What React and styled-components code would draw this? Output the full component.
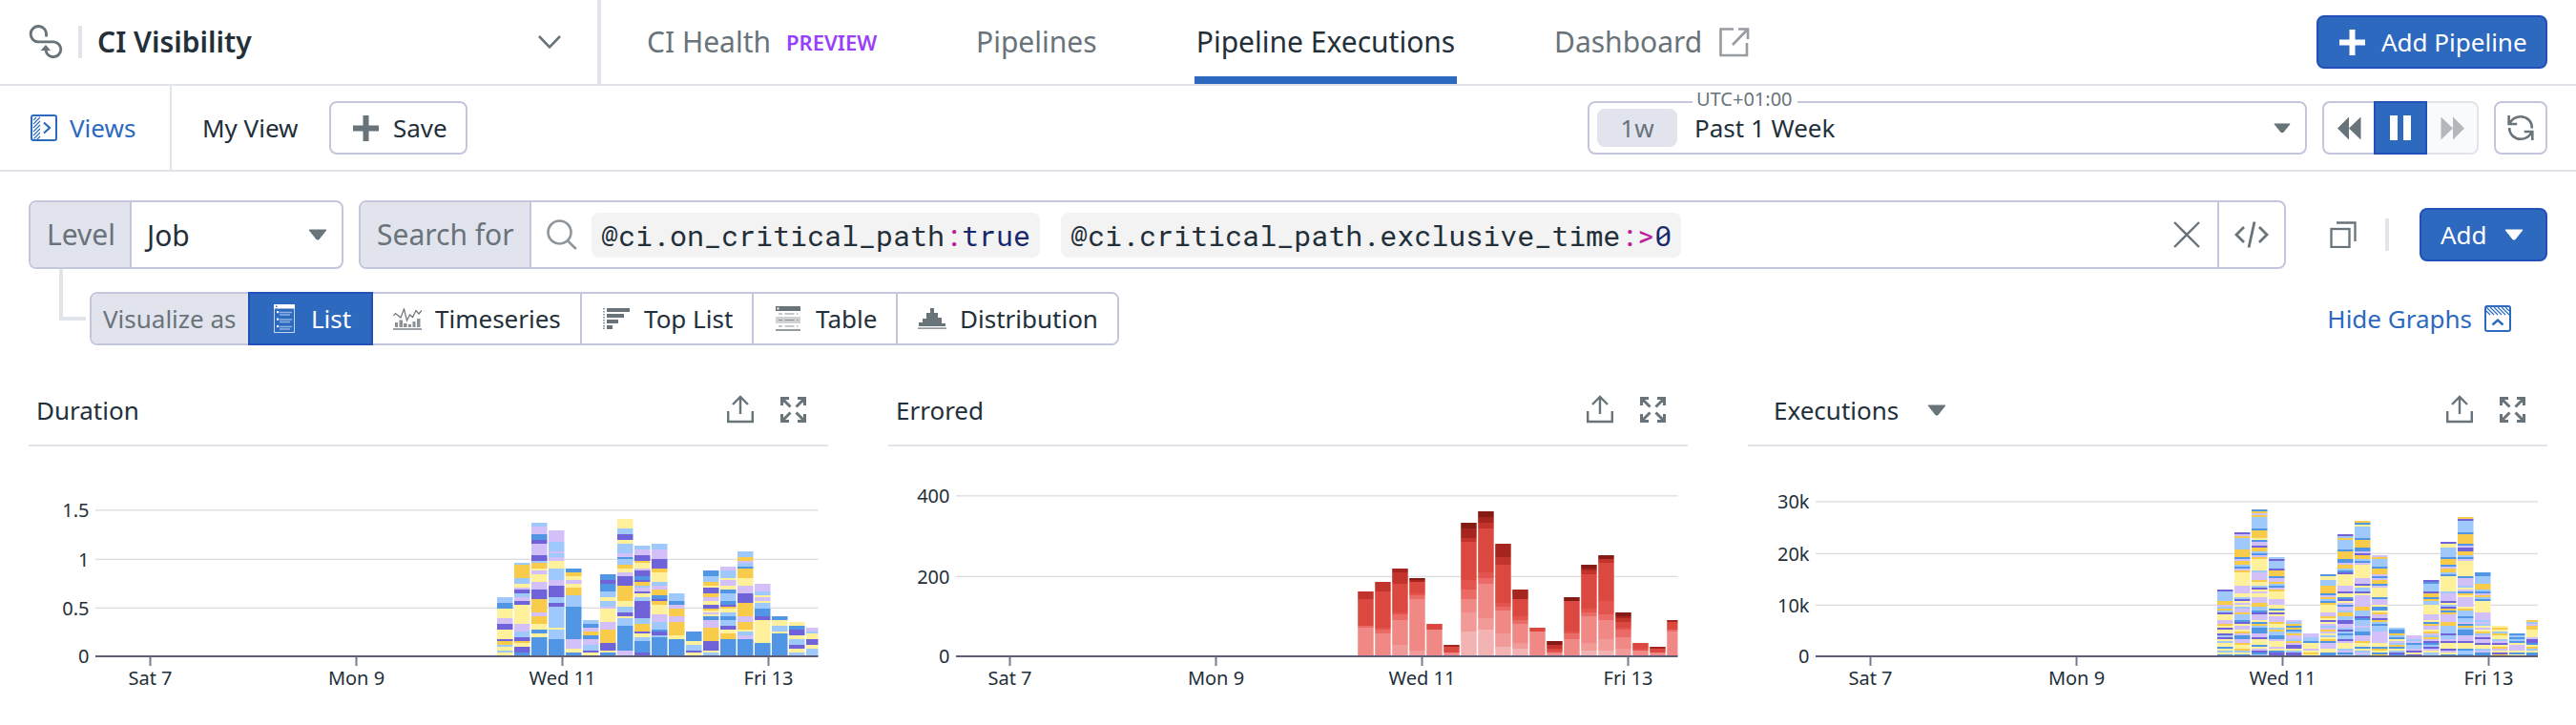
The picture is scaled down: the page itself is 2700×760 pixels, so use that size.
import React from "react";
import styled, { createGlobalStyle, css } from "styled-components";

const ink = "#232f39";
const grey = "#69737a";
const line = "#e1e5eb";
const border = "#c3c6dc";
const blue = "#2c69bf";
const blueEdge = "#2350b8";
const fill = "#e2e4ed";
const sans = `"Noto Sans", "Open Sans", sans-serif`;
const mono = `"Roboto Mono", "Liberation Mono", monospace`;

const GlobalStyle = createGlobalStyle`
  *, *::before, *::after { box-sizing: border-box; }
  body { margin: 0; background: #fff; }
  svg { display: block; flex: none; }
`;

const Page = styled.div`
  width: 2700px;
  height: 760px;
  overflow: hidden;
  background: #fff;
  color: ${ink};
  font: 400 26px/36px ${sans};
`;

const Bar = styled.div`
  height: 90px;
  display: flex;
  align-items: center;
  padding-right: 30px;
  border-bottom: 2px solid ${line};
`;

const ProductPicker = styled.div`
  width: 630px;
  height: 88px;
  display: flex;
  align-items: center;
  padding: 0 38px 0 30px;
  border-right: 4px solid ${line};
`;

const ProductName = styled.h1`
  flex: 1;
  margin: 0 0 0 16px;
  font-size: 30px;
  line-height: 40px;
  font-weight: 600;
`;

const Separator = styled.span`
  width: 4px;
  height: 34px;
  background: ${line};
  margin: ${(p) => p.$margin || 0};
`;

const Nav = styled.nav`
  flex: 1;
  height: 88px;
  display: flex;
  gap: 102px;
  padding-left: 48px;
`;

const NavItem = styled.a`
  width: ${(p) => p.$width}px;
  display: flex;
  align-items: center;
  white-space: nowrap;
  font-size: 30px;
  line-height: 40px;
  color: ${grey};
  ${(p) =>
    p.$active &&
    css`
      color: ${ink};
      justify-content: center;
      box-shadow: inset 0 -8px 0 ${blue};
    `}
`;

const Preview = styled.span`
  margin-left: 16px;
  font-size: 22px;
  font-weight: 600;
  color: #983ffb;
`;

const Button = styled.button`
  width: ${(p) => p.$width}px;
  height: 56px;
  flex: none;
  display: flex;
  align-items: center;
  justify-content: ${(p) => p.$justify || "flex-start"};
  gap: ${(p) => p.$gap || 0}px;
  padding: 0 0 0 ${(p) => p.$pad || 0}px;
  font: 400 26px/36px ${sans};
  white-space: nowrap;
  border-radius: 8px;
  border: 2px solid ${(p) => (p.$primary ? blueEdge : border)};
  background: ${(p) => (p.$primary ? blue : "#fff")};
  color: ${(p) => (p.$primary ? "#fff" : ink)};
`;

const ViewsToggle = styled.div`
  width: 180px;
  height: 88px;
  display: flex;
  align-items: center;
  gap: 13px;
  padding-left: 32px;
  border-right: 2px solid ${line};
  color: ${blue};
`;

const ViewName = styled.span`
  width: 133px;
  margin-left: 32px;
`;

const Spacer = styled.div`
  flex: 1;
`;

const TimePicker = styled.div`
  position: relative;
  width: 754px;
  height: 56px;
  display: flex;
  align-items: center;
  padding: 0 15px 0 8px;
  margin-right: 16px;
  border: 2px solid ${border};
  border-radius: 8px;
`;

const ZoneLabel = styled.span`
  position: absolute;
  left: 108px;
  top: -17px;
  padding: 0 5px 0 4px;
  background: #fff;
  color: ${grey};
  font-size: 20px;
  line-height: 26px;
`;

const SpanPill = styled.span`
  width: 84px;
  height: 40px;
  display: flex;
  align-items: center;
  justify-content: center;
  margin-right: 18px;
  border-radius: 8px;
  background: ${fill};
  color: ${grey};
`;

const Playback = styled.div`
  display: flex;
  margin-right: 16px;
`;

const PlayButton = styled.button`
  width: ${(p) => p.$width}px;
  height: 56px;
  padding: 0;
  display: flex;
  align-items: center;
  justify-content: center;
  background: #fff;
  border: 2px solid ${border};
  &:first-child { border-right: 0; border-radius: 8px 0 0 8px; }
  &:last-child { border-left: 0; border-radius: 0 8px 8px 0; border-color: ${line}; background: #f9fafc; }
  ${(p) => p.$active && css`background: ${blue}; border-color: ${blueEdge};`}
`;

const QueryRow = styled.div`
  height: 102px;
  display: flex;
  align-items: center;
  padding: 30px 30px 0;
`;

const Field = styled.div`
  width: ${(p) => p.$width}px;
  height: 72px;
  margin-right: ${(p) => p.$after}px;
  display: flex;
  align-items: stretch;
  border: 2px solid ${border};
  border-radius: 8px;
  overflow: hidden;
  font-size: 30px;
  line-height: 67px;
  white-space: nowrap;
`;

const FieldLabel = styled.span`
  width: ${(p) => p.$width}px;
  padding-left: 17px;
  border-right: 2px solid ${border};
  background: ${fill};
  color: ${grey};
`;

const FieldValue = styled.div`
  flex: 1;
  display: flex;
  align-items: center;
  justify-content: space-between;
  padding: 0 15px 0 16px;
`;

const SearchInput = styled.div`
  flex: 1;
  display: flex;
  align-items: center;
  padding: 0 18px 0 16px;
`;

const Chip = styled.span`
  height: 47px;
  padding: 0 10px;
  margin-left: ${(p) => p.$gap}px;
  border-radius: 8px;
  background: #f3f3f3;
  font: 400 30px/47px ${mono};
`;
const Operator = styled.span`color: #bb1f9d;`;
const Value = styled.span`color: #17296b;`;

const CodeToggle = styled.div`
  width: 70px;
  display: flex;
  align-items: center;
  justify-content: center;
  border-left: 2px solid ${border};
`;

const VisualizeRow = styled.div`
  height: 80px;
  display: flex;
  padding: 0 68px 0 62px;
`;

const Connector = styled.span`
  width: 28px;
  height: 54px;
  border-left: 4px solid ${line};
  border-bottom: 4px solid ${line};
`;

const Segments = styled.div`
  height: 56px;
  display: flex;
  margin: 24px 0 0 4px;
  border: 2px solid ${border};
  border-radius: 8px;
`;

const SegmentLabel = styled.span`
  width: 164px;
  padding-left: 12px;
  line-height: 52px;
  border-radius: 6px 0 0 6px;
  background: ${fill};
  color: ${grey};
  white-space: nowrap;
`;

const Segment = styled.button`
  width: ${(p) => p.$width}px;
  height: 52px;
  display: flex;
  align-items: center;
  gap: ${(p) => p.$gap}px;
  padding: 0 0 0 ${(p) => p.$pad}px;
  font: 400 26px/36px ${sans};
  color: ${ink};
  white-space: nowrap;
  background: #fff;
  border: 0;
  border-right: 2px solid ${border};
  &:last-child { border-right: 0; border-radius: 0 6px 6px 0; }
  ${(p) =>
    p.$active &&
    css`
      height: 56px;
      margin: -2px 0;
      border: 2px solid ${blueEdge};
      background: ${blue};
      color: #fff;
    `}
`;

const HideGraphs = styled.a`
  display: flex;
  align-items: center;
  gap: 13px;
  margin-top: 24px;
  height: 56px;
  color: ${blue};
`;

const Panels = styled.div`
  display: grid;
  grid-template-columns: repeat(3, 838px);
  gap: 63px;
  padding: 30px 30px 0;
`;

const PanelHead = styled.div`
  height: 76px;
  display: flex;
  align-items: center;
  padding: 0 23px 0 ${(p) => p.$inset}px;
  border-bottom: 2px solid ${line};
`;

const PanelTitle = styled.h2`
  margin: 2px 0 0;
  font-size: 26px;
  line-height: 36px;
  font-weight: 400;
`;

const PanelActions = styled.div`
  display: flex;
  align-items: center;
  gap: 28px;
  margin-left: auto;
`;

const TitleCaret = styled.span`margin: 2px 0 0 30px;`;

/* ---------- icons ---------- */

const Plus = ({ color, size = 27 }) => (
  <svg width={size} height={size} viewBox="0 0 27 27">
    <path d="M13.5 0v27M0 13.5h27" stroke={color} strokeWidth="6" />
  </svg>
);

const Caret = ({ color = grey, width = 20 }) => (
  <svg width={width} height={(width * 12) / 20} viewBox="0 0 20 12">
    <path d="M1 1h18L11 11H9z" fill={color} stroke={color} strokeLinejoin="round" />
  </svg>
);

const LogoIcon = () => (
  <svg width="36" height="36" viewBox="0 0 36 36" fill="none" stroke={grey} strokeWidth="2.9">
    <path d="M18.500 12.500V10.500a8.200 8.200 0 1 0-8.200 7.400H26.500a7.900 7.900 0 1 1-8.500 8.400V25" />
    <path d="M12.500 27h10.500L18 21z" fill={grey} stroke="none" />
  </svg>
);

const Chevron = () => (
  <svg width="24" height="14" viewBox="0 0 24 14" fill="none" stroke={grey} strokeWidth="2.6">
    <path d="M1 1l11 11.4L23 1" />
  </svg>
);

const ViewsIcon = () => (
  <svg width="28" height="28" viewBox="0 0 28 28" fill="none" stroke={blue}>
    <rect x="1" y="1" width="26" height="26" rx="2" strokeWidth="2" />
    <path d="M3 6l3-3M3 10l7-7M3 14l7-7M3 18l7-7M3 22l7-7M3.500 25.500l6.500-6.500M6.500 26.500l3.500-3.500" strokeWidth="1.1" />
    <path d="M14 8.500l6 5.500-6 5.500" strokeWidth="2.2" />
  </svg>
);

const HideIcon = () => (
  <svg width="28" height="28" viewBox="0 0 28 28" fill="none" stroke={blue}>
    <rect x="1" y="1" width="26" height="26" rx="2" strokeWidth="2" />
    <path d="M2 6l4 4M2 2l8 8M6 2l8 8M10 2l8 8M14 2l8 8M18 2l8 8M22 2l4 4" strokeWidth="1.1" />
    <path d="M8.500 20.500l5.500-5 5.500 5" strokeWidth="2.4" />
  </svg>
);

const ExternalIcon = () => (
  <svg width="32" height="31" viewBox="0 0 32 31" fill="none" stroke="#969ca1" strokeWidth="2.6">
    <path d="M15 1.500H1.500v27.500h27.500V16" />
    <path d="M20 1.500h10V12M30 1.500L14 18" />
  </svg>
);

const Rewind = ({ color = grey, flip }) => (
  <svg width="25" height="25" viewBox="0 0 25 25" fill={color}>
    <g transform={flip ? "translate(25 0) scale(-1 1)" : undefined}>
      <path d="M0 12.500L12 0.500v24zM12 12.500L24.500 0.500v24z" />
    </g>
  </svg>
);

const Pause = () => (
  <svg width="22" height="26" viewBox="0 0 22 26" fill="#fff">
    <path d="M0 0h8v26H0zM14 0h8v26h-8z" />
  </svg>
);

const Refresh = () => (
  <svg width="28" height="28" viewBox="0 0 28 28" fill="none" stroke={grey} strokeWidth="2.6">
    <path d="M25.800 14.500C26 7 20.500 2.200 14 2.200c-5 0-9 2.500-11.500 6.800" />
    <path d="M1.600 1v9h8.600" />
    <path d="M2.200 14c0 7 5.300 11.800 11.800 11.800 5 0 9-2.600 11.300-6.800" />
    <path d="M26.300 27v-9h-8.600" />
  </svg>
);

const SearchIcon = () => (
  <svg width="32" height="32" viewBox="0 0 32 32" fill="none" stroke="#8f969b" strokeWidth="2.600">
    <circle cx="13.500" cy="13.500" r="12" />
    <path d="M21.800 22.200l9 8.800" />
  </svg>
);

const CloseIcon = () => (
  <svg width="28" height="28" viewBox="0 0 28 28" stroke={grey} strokeWidth="2.400">
    <path d="M1 1l26 26M27 1L1 27" />
  </svg>
);

const CodeIcon = () => (
  <svg width="36" height="28" viewBox="0 0 36 28" fill="none" stroke={grey} strokeWidth="2.800">
    <path d="M10 6L2 14l8 8M26 6l8 8-8 8M21 0.500L15 27.500" />
  </svg>
);

const CopyIcon = () => (
  <svg width="28" height="28" viewBox="0 0 28 28" fill="none" stroke={grey} strokeWidth="2.300">
    <rect x="1.500" y="8" width="19" height="19" />
    <path d="M7 1.500h19.500V21" />
  </svg>
);

const ShareIcon = () => (
  <svg width="28" height="30" viewBox="0 0 28 30" fill="none" stroke={grey} strokeWidth="2.400">
    <path d="M1.200 17v11h25.600V17M14 20V2.500M6 10l8-8 8 8" />
  </svg>
);

const ExpandIcon = () => (
  <svg width="27" height="27" viewBox="0 0 27 27" fill="none" stroke={grey} strokeWidth="3">
    <path d="M1.500 9V1.500H9M2 2l8.500 8.500M18 1.500h7.500V9M25 2l-8.500 8.500M1.500 18v7.500H9M2 25l8.500-8.500M18 25.500h7.500V18M25 25l-8.500-8.500" />
  </svg>
);

const ListIcon = () => (
  <svg width="22" height="30" viewBox="0 0 22 30">
    <rect x="0.500" y="0.500" width="21" height="29" fill="none" stroke="#c3d5ee" />
    <rect width="22" height="4.500" fill="#fff" />
    <rect x="2" y="1.500" width="1.500" height="1.500" fill={blue} />
    {[7, 14.500, 22].map((y) => (
      <g key={y}>
        <rect x="3" y={y} width="2.200" height="2.200" fill="#fff" />
        <path d={`M6 ${y + 1.500}h13M6 ${y + 4}h11`} stroke="#8fb2e0" strokeWidth="1.500" />
      </g>
    ))}
  </svg>
);

const TimeseriesIcon = () => (
  <svg width="30" height="23" viewBox="0 0 30 23" fill="none">
    <path d="M0.500 8l2-2.500 3 2.500 2.500 2L11.500 1l3 12 3-6 3 2.500 3.500-7 3 3.500 3-3.500" stroke={grey} strokeWidth="1.200" />
    <path d="M2 15h3v5H2zM6.500 12.500h3.500V20H6.500zM11 16h3.500v4H11zM16 17h3v3h-3zM20.500 14h3v6h-3zM25 11h3.500v9H25z" fill="#8a9196" />
    <path d="M0 22h30" stroke="#8a9196" strokeWidth="1.700" />
  </svg>
);

const TopListIcon = () => (
  <svg width="28" height="22" viewBox="0 0 28 22" fill={grey}>
    <path d="M4 0h24v4H4zM4 6h18v4H4zM4 12h12v4H4zM4 18h6v4H4z" />
    <path d="M0 0h2v1.500H0zM0 3h2v1.500H0zM0 6h2v1.500H0zM0 9h2v1.500H0zM0 12h2v1.500H0zM0 15h2v1.500H0zM0 18h2v1.500H0zM0 20.500h2v1.500H0z" opacity="0.7" />
  </svg>
);

const TableIcon = () => (
  <svg width="26" height="26" viewBox="0 0 26 26">
    <path d="M0 0h26v5H0z" fill={grey} />
    <path d="M1.500 1.500h2v2h-2z" fill="#fff" />
    <path d="M0 11h26v7H0z" fill="#cfd2d5" />
    <path d="M3 8h4M9.500 8h10M22 8h1.500M3 14.500h4M9.500 14.500h10M22 14.500h1.500M3 21h4M9.500 21h10M22 21h1.500" stroke="#8a9196" strokeWidth="1.200" />
    <path d="M0 25h26" stroke="#8a9196" strokeWidth="1.800" />
  </svg>
);

const DistributionIcon = () => (
  <svg width="30" height="22" viewBox="0 0 30 22" fill={grey}>
    <path d="M1 19v-4h4v-4h4V5h4V0h4v5h4v5h4v6h4v3z" />
    <path d="M0 20.300h30v1.700H0z" opacity="0.7" />
  </svg>
);

/* ---------- charts ---------- */

const categorical = {
  b: "#5196e5",
  l: "#9fc8fb",
  y: "#fff09c",
  g: "#f8cb4b",
  p: "#7062d8",
  v: "#d4c0f9",
};

const reds = {
  A: "#861b15",
  B: "#a6261f",
  C: "#c2332b",
  D: "#db483f",
  E: "#e4544e",
  F: "#ea6a66",
  G: "#f08986",
  H: "#f19a98",
  I: "#f3b3b2",
};

// Each string is one stacked bar, top to bottom: a colour key and its height in steps.
const durationBars = [
  "l3b3y5v3p3y5p1g2l1y2l1y2",
  "l1g7l3y2v1p2l2v2p2y10v4l3p2g1y2p3b2",
  "l2v4b3p2v6p3l1g3y1v2y4v4p5g7v2g4y3b2y2b10",
  "v6l5v1l2v2y4l6v3p6l3p2l11y1l5b9",
  "b2g2y2v2y2g4l6b17v5y2b2",
  "l2b2v2g2b2v3l3p1y2",
  "b3p2b4l3y2l3v1y7v4g7p4y1b2",
  "y5l3p3y2l5v2b1l3g2y2v2p5g8y3l3p2y1l4b13v3",
  "l2v3p3g1y3v1p3b2p1g2l1v2p1y2l2p9l3g4p1y2l2b6p2",
  "l3v5p5g2y5l2v2g3b2p1g2y5v4l4b1p2l1b10",
  "l4b2v2g4v3g7y2b9",
  "b5y2l3p1y2",
  "b3l3g2y1p3g2v2y2p2g1y1v1y1b2v4g7p5y1l2",
  "v2l4y1v3y2b2l4b2p1g1y2l2b2l3p2y2g3b9",
  "l3g2v1l2b1g5y4v4p5g7v3g4y1l2v2b9",
  "v4l2y1v2y1l3b4p2y12b7",
  "b2y3l3y1b12",
  "y2b2p3y2l3p2y2l2",
  "v2l1y3p3y2l4",
];

const erroredBars = [
  "C4D14F1G15",
  "C5D19E1F2G12",
  "B2C6D15E1F3G13H6",
  "A1B1D6E1F2G27H3",
  "D3G14",
  "B1D3G2",
  "A3B5C2D20E5F5G7H10I13",
  "A3B3C3D23E3F3G18H6I14",
  "B7C4D20E2F2G12H7I5",
  "B5D9E2F2G10H3I4",
  "D2G13",
  "A2C2D1E1G2",
  "A2D16E1F3G9",
  "A2B1C2D18E2F2G14H4I3",
  "A2C2D20E7F3G10H6I3",
  "A2B1C2D3E1F4G6H4",
  "D3E1G3",
  "B1D2G2",
  "B1D4F1G13",
];

const executionBars = [
  "p1l5g2v1l1g1l1p1y3v2g1y1p1y2p1l1p1y1l1y2b1y1l1y1b1",
  "p1v1g1l6g4b1v1g2l1b1v1g1y7v4y2l1p1y1v1y1l1v2g1l3b1p1y1v2y1g1v1b2v2g1y2g1l1y1b1",
  "b1g1v1g1l6b1g4y1b1v2p1g2l1b1v1g1y6l1v4g1y2l1p1y1v1y2v3g2l2b1p1v3y1b1g1l1b3v2p1y3b1y1v1p1b1l1",
  "l1p1l4p1g3b1v2g1l1b1v1g1y4v3y2b1y1p1y1v3g1y2l1g1l2b2v1y3v1y1b1p2",
  "v1l1g1b1g1b1l1g1v2l1g1v1p2y1l1p2",
  "v2l2b1y3v1y1g1y1",
  "b1y2l3g4b1v1g1l1b1g1y4v2g1y1p1y1v1l1v1g1v1y1l1y1g1b1v3y2b2",
  "p1l1g1l5b1g4b2v1g2l1b1p1y6v3p1y2b1p1y1v1b1v2l1g2l2p2v2l1p1l1b1l2p1v1y3l1v1b1l1",
  "g1b1y1l6b1g4b2v1p1g2l1b1v1y7v3p1y1l2p1y1v1v5g2l3p1b1l3v1l2b2v3g1y2b1y1l1v1l1",
  "v1g1l4b1g3v1b1v1g2b1v1y5b1v3y1b2y1g1v2p1g1l1b1l3v6y2b1g1y1b1g1",
  "l1b2g1l1b1y1v1l1g1b1y1l1p1b1",
  "v2l1v1b1l2v1p1y1p1",
  "p1b1l4p1g2b1g1l2y5v3y1b1g1v2y1g1v1l1g1v1p1b1l1p1v1y1l2",
  "p1y2l5b1g3b1v1g2l1b1y8l1v4p1y1l1p1g1b1g1v4g2l4p1l2v1p1y3p1v1y1b1",
  "g1p1l6b1g5b1v1p2g2l1b1v1y8b1v4l1y1v1b1g1y1v5y1g1l3b1l2v1b1g1l1b3v3p1y3b1l1l1b1",
  "b2l4g3l1b1v1g1l1b1y6v4l1v1l1y1v1y1g1l1v1p1v2p1y2l1v1b1b1",
  "y1g1y1l1g1y2l1v1p1y1g1v1y1p1g1",
  "b1l1b1l1b1y1v3y1b1y1",
  "g1l1v1g2y4v1p2b1y1g1l1y1b2",
];

const parseBar = (s) => [...s.matchAll(/([a-zA-Z])(\d+)/g)].map((m) => [m[1], Number(m[2])]);

const STEP = 2;
const PITCH = 18;
const BASE = 220;

function Chart({ bars, palette, firstBar, left, right, yTicks, firstTick }) {
  const days = ["Sat 7", "Mon 9", "Wed 11", "Fri 13"];
  return (
    <svg width="838" height="290" viewBox="0 0 838 290" fontFamily="Noto Sans, sans-serif" fontSize="20" fill={ink}>
      {yTicks.map(([label, y]) => (
        <g key={label}>
          {y !== BASE && <rect x={left} y={y - 0.8} width={right - left} height="1.3" fill="#dcdddf" />}
          <text x={left - 6.500} y={y + 7} textAnchor="end">{label}</text>
        </g>
      ))}
      {bars.map((bar, i) => {
        const parts = parseBar(bar);
        let y = BASE - parts.reduce((sum, [, n]) => sum + n * STEP, 0);
        const x = firstBar + i * PITCH;
        const width = Math.min(16.5, right - x);
        return (
          <g key={i}>
            {parts.map(([key, n], j) => {
              const top = y;
              y += n * STEP;
              return <rect key={j} x={x} y={top} width={width} height={n * STEP} fill={palette[key]} />;
            })}
          </g>
        );
      })}
      <rect x={left} y={BASE - 1} width={right - left} height="2" fill="#5d5f79" />
      {days.map((day, i) => {
        const x = firstTick + i * 216;
        return (
          <g key={day}>
            <rect x={x - 1} y={BASE + 1} width="2" height="9" fill="#777a91" />
            <text x={x} y={BASE + 30} textAnchor="middle">{day}</text>
          </g>
        );
      })}
    </svg>
  );
}

function Panel({ title, caret, inset = 8, ...chart }) {
  return (
    <section>
      <PanelHead $inset={inset}>
        <PanelTitle>{title}</PanelTitle>
        {caret && <TitleCaret><Caret /></TitleCaret>}
        <PanelActions>
          <ShareIcon />
          <ExpandIcon />
        </PanelActions>
      </PanelHead>
      <Chart {...chart} />
    </section>
  );
}

const LinkText = styled.span`
  width: 173px;
`;

export default function App() {
  return (
    <Page>
      <GlobalStyle />
      <Bar as="header">
        <ProductPicker>
          <LogoIcon />
          <Separator $margin="0 0 0 16px" />
          <ProductName>CI Visibility</ProductName>
          <Chevron />
        </ProductPicker>
        <Nav>
          <NavItem $width={243}>CI Health<Preview>PREVIEW</Preview></NavItem>
          <NavItem $width={127}>Pipelines</NavItem>
          <NavItem $width={275} $active>Pipeline Executions</NavItem>
          <NavItem $width={210}>
            <LinkText>Dashboard</LinkText>
            <ExternalIcon />
          </NavItem>
        </Nav>
        <Button $primary $width={242} $pad={22} $gap={17}><Plus color="#fff" />Add Pipeline</Button>
      </Bar>

      <Bar>
        <ViewsToggle><ViewsIcon />Views</ViewsToggle>
        <ViewName>My View</ViewName>
        <Button $width={145} $pad={23} $gap={15}><Plus color={grey} />Save</Button>
        <Spacer />
        <TimePicker>
          <ZoneLabel>UTC+01:00</ZoneLabel>
          <SpanPill>1w</SpanPill>
          Past 1 Week
          <Spacer />
          <Caret width={18} />
        </TimePicker>
        <Playback>
          <PlayButton $width={54}><Rewind /></PlayButton>
          <PlayButton $width={56} $active><Pause /></PlayButton>
          <PlayButton $width={54}><Rewind flip color="#b4b8bc" /></PlayButton>
        </Playback>
        <Button $width={56} $justify="center"><Refresh /></Button>
      </Bar>

      <QueryRow>
        <Field $width={330} $after={16}>
          <FieldLabel $width={106}>Level</FieldLabel>
          <FieldValue>Job<Caret /></FieldValue>
        </Field>
        <Field $width={2020} $after={46}>
          <FieldLabel $width={179}>Search for</FieldLabel>
          <SearchInput>
            <SearchIcon />
            <Chip $gap={15}>@ci.on_critical_path<Operator>:</Operator><Value>true</Value></Chip>
            <Chip $gap={22}>@ci.critical_path.exclusive_time<Operator>:&gt;</Operator><Value>0</Value></Chip>
            <Spacer />
            <CloseIcon />
          </SearchInput>
          <CodeToggle><CodeIcon /></CodeToggle>
        </Field>
        <CopyIcon />
        <Separator $margin="0 32px 0 30px" />
        <Button $primary $width={134} $pad={20} $gap={18}>Add<Caret color="#fff" /></Button>
      </QueryRow>

      <VisualizeRow>
        <Connector />
        <Segments>
          <SegmentLabel>Visualize as</SegmentLabel>
          <Segment $active $width={131} $pad={25} $gap={17}><ListIcon />List</Segment>
          <Segment $width={219} $pad={21} $gap={14}><TimeseriesIcon />Timeseries</Segment>
          <Segment $width={180} $pad={22} $gap={15}><TopListIcon />Top List</Segment>
          <Segment $width={151} $pad={23} $gap={16}><TableIcon />Table</Segment>
          <Segment $width={230} $pad={21} $gap={14}><DistributionIcon />Distribution</Segment>
        </Segments>
        <Spacer />
        <HideGraphs>Hide Graphs<HideIcon /></HideGraphs>
      </VisualizeRow>

      <Panels>
        <Panel
          title="Duration"
          bars={durationBars}
          palette={categorical}
          left={70}
          right={827.5}
          firstBar={491}
          firstTick={127.5}
          yTicks={[["1.5", 67], ["1", 118.5], ["0.5", 169.5], ["0", BASE]]}
        />
        <Panel
          title="Errored"
          bars={erroredBars}
          palette={reds}
          left={71}
          right={827.5}
          firstBar={492.2}
          firstTick={127.5}
          yTicks={[["400", 52], ["200", 136.5], ["0", BASE]]}
        />
        <Panel
          title="Executions"
          caret
          inset={27}
          bars={executionBars}
          palette={categorical}
          left={71}
          right={828}
          firstBar={492}
          firstTick={128.5}
          yTicks={[["30k", 58], ["20k", 112.5], ["10k", 166.5], ["0", BASE]]}
        />
      </Panels>
    </Page>
  );
}
